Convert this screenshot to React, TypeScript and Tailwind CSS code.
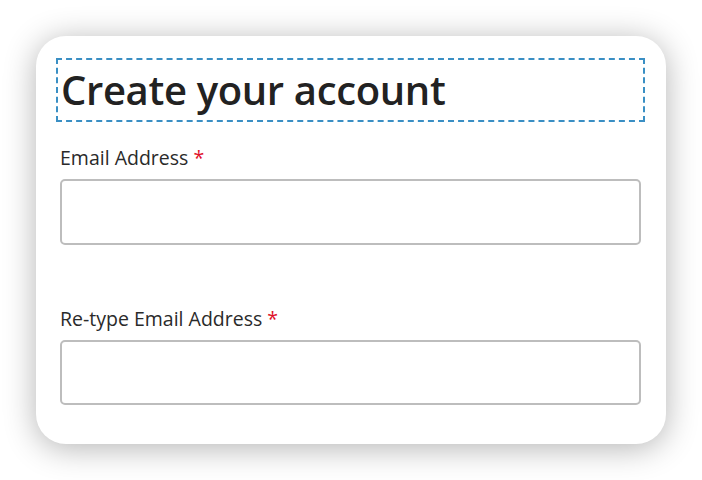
export default function App() {
  return (
    <div className="w-[702px] h-[480px] bg-white pt-[36px] pl-[36px]" style={{ fontFamily: "'Open Sans', 'Noto Sans', sans-serif" }}>
      <div className="w-[630px] h-[408px] bg-white rounded-[30px] shadow-[0_4px_32px_rgba(0,0,0,0.3)] pt-[22px] pl-[20px] pr-[21px]">
        <div className="border-2 border-dashed border-[#3a8fc4] h-[64px] flex items-center pl-[3px]">
          <h1 className="text-[40px] font-semibold text-[#222] leading-none tracking-[-0.35px]">Create your account</h1>
        </div>
        <div className="pl-[4px] pr-[4px]">
          <label className="block mt-[24px] text-[19.5px] text-[#2a2a2a] leading-[24px]">
            Email Address <span className="text-[#e0102a]">*</span>
          </label>
          <input className="block mt-[9px] w-full h-[66px] border-2 border-[#bdbdbd] rounded-[5px]" />
          <label className="block mt-[62px] text-[19.5px] text-[#2a2a2a] leading-[24px]">
            Re-type Email Address <span className="text-[#e0102a]">*</span>
          </label>
          <input className="block mt-[9px] w-full h-[65px] border-2 border-[#bdbdbd] rounded-[5px]" />
        </div>
      </div>
    </div>
  );
}
